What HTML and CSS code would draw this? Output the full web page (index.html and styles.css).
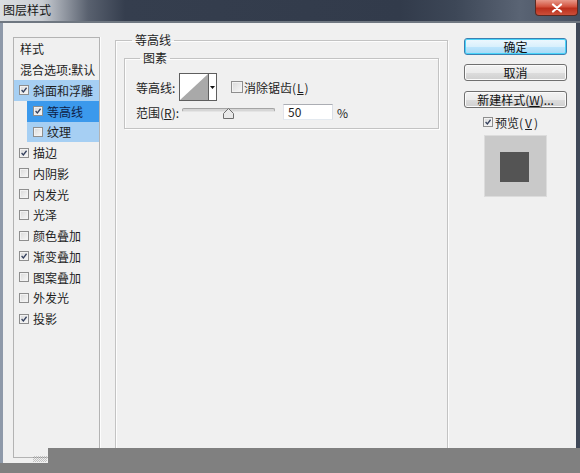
FILE: index.html
```html
<!DOCTYPE html>
<html>
<head>
<meta charset="utf-8">
<title>图层样式</title>
<link rel="stylesheet" href="styles.css">
</head>
<body>
<div class="window">
  <div class="titlebar">
    <span class="title">图层样式</span>
    <span class="close"><svg width="12" height="10" viewBox="0 0 12 10"><path d="M2 1.5 L10 8.5 M10 1.5 L2 8.5" stroke="#fff" stroke-width="2.2" stroke-linecap="round"/></svg></span>
  </div>
  <div class="frame">
    <div class="client">
      <ul class="styles">
        <li class="head head-first">样式</li>
        <li class="head">混合选项:默认</li>
        <li class="item active"><span class="cb"><svg viewBox="0 0 10 10"><path d="M2 5 L4.2 7.4 L8.2 2.2" fill="none" stroke="#34405e" stroke-width="1.6"/></svg></span>斜面和浮雕</li>
        <li class="item sub selected"><span class="cb"><svg viewBox="0 0 10 10"><path d="M2 5 L4.2 7.4 L8.2 2.2" fill="none" stroke="#34405e" stroke-width="1.6"/></svg></span>等高线</li>
        <li class="item sub active"><span class="cb"></span>纹理</li>
        <li class="item"><span class="cb"><svg viewBox="0 0 10 10"><path d="M2 5 L4.2 7.4 L8.2 2.2" fill="none" stroke="#34405e" stroke-width="1.6"/></svg></span>描边</li>
        <li class="item"><span class="cb"></span>内阴影</li>
        <li class="item"><span class="cb"></span>内发光</li>
        <li class="item"><span class="cb"></span>光泽</li>
        <li class="item"><span class="cb"></span>颜色叠加</li>
        <li class="item"><span class="cb"><svg viewBox="0 0 10 10"><path d="M2 5 L4.2 7.4 L8.2 2.2" fill="none" stroke="#34405e" stroke-width="1.6"/></svg></span>渐变叠加</li>
        <li class="item"><span class="cb"></span>图案叠加</li>
        <li class="item"><span class="cb"></span>外发光</li>
        <li class="item"><span class="cb"><svg viewBox="0 0 10 10"><path d="M2 5 L4.2 7.4 L8.2 2.2" fill="none" stroke="#34405e" stroke-width="1.6"/></svg></span>投影</li>
      </ul>

      <fieldset class="group">
        <legend>等高线</legend>
        <fieldset class="inner">
          <legend>图素</legend>
          <div class="row row-contour">
            <span class="lbl lbl-contour">等高线:</span>
            <div class="picker">
              <svg class="curve" width="28" height="26" viewBox="0 0 28 26"><rect width="28" height="26" fill="#fff"/><polygon points="0,26 28,26 28,0" fill="#a9a9a9"/></svg>
              <span class="drop"><svg width="5" height="3" viewBox="0 0 5 3"><polygon points="0,0 5,0 2.5,3" fill="#111"/></svg></span>
            </div>
            <span class="check"><span class="cb cb-big"></span>消除锯齿(<u>L</u>)</span>
          </div>
          <div class="row row-range">
            <span class="lbl lbl-range">范围(<u>R</u>):</span>
            <div class="slider">
              <div class="track"></div>
              <svg class="thumb" width="11" height="11" viewBox="0 0 11 11"><polygon points="0.5,5.5 5.5,0.5 10.5,5.5 10.5,10.5 0.5,10.5" fill="#e9e9e9" stroke="#6e6e6e"/></svg>
            </div>
            <div class="input">50</div>
            <span class="pct">%</span>
          </div>
        </fieldset>
      </fieldset>

      <div class="side">
        <button class="btn btn-default">确定</button>
        <button class="btn">取消</button>
        <button class="btn btn-new">新建样式(<u>W</u>)...</button>
        <div class="preview-check"><span class="cb"><svg viewBox="0 0 10 10"><path d="M2 5 L4.2 7.4 L8.2 2.2" fill="none" stroke="#34405e" stroke-width="1.6"/></svg></span>预览(<u>V</u>)</div>
        <div class="preview"><div class="swatch"></div></div>
      </div>
    </div>
  </div>
</div>
<div class="grip"></div>
<div class="crop"></div>
</body>
</html>
```

FILE: styles.css
```css
* { box-sizing: border-box; }
html, body { margin: 0; }
body {
  width: 580px;
  height: 473px;
  background: #808080;
  overflow: hidden;
  position: relative;
  font-family: "Noto Sans CJK SC", "Noto Sans", sans-serif;
  font-size: 12px;
  color: #1e1e1e;
}
u { text-decoration: underline; text-underline-offset: 1px; }

.window { height: 463px; display: flex; flex-direction: column; }

.titlebar {
  height: 23px;
  flex: none;
  display: flex;
  align-items: flex-start;
  background: linear-gradient(90deg, #dcdfe2 0, #c9cdd3 42px, #59616f 88px, #353e4e 125px, #323b4b 400px, #3d4757 455px, #5a6474 520px, #454f60 580px);
  border-bottom: 2px solid #6f7781;
}
.title { line-height: 20px; padding-left: 3px; color: #151515; }
.close {
  margin-left: auto;
  margin-right: 2px;
  width: 43px;
  height: 16px;
  display: flex;
  align-items: center;
  justify-content: center;
  background: linear-gradient(#e8998a, #d2513d 45%, #bb2f1c 55%, #cc4f3a);
  border: 1px solid #5b2a22;
  border-top: none;
  border-radius: 0 0 4px 4px;
}

.frame {
  flex: 1;
  display: flex;
  background: #f0f0f0;
  border-left: 3px solid #8e99a9;
  border-right: 4px solid #3f4858;
  overflow: hidden;
}
.client { flex: 1; display: flex; align-items: flex-start; padding: 10px 9px 0 10px; }

/* style list */
.styles {
  list-style: none;
  margin: 4px 0 0;
  padding: 0;
  width: 87px;
  height: 421px;
  flex: none;
  border: 1px solid #b3b3b3;
  box-shadow: 1px 0 0 #fdfdfd;
}
.styles li { display: flex; align-items: center; white-space: nowrap; }
.head { height: 21px; padding-left: 6px; }
.item { height: 20.75px; padding-left: 5px; }
.item .cb { margin-right: 4px; }
.sub { margin-left: 13px; padding-left: 6px; }
.active { background: #a6cff3; }
.selected { background: #3b99ec; color: #0f1d45; }

.cb {
  width: 10px;
  height: 10px;
  flex: none;
  border: 1px solid #8e8e8e;
  background: linear-gradient(135deg, #d9d9d9, #f8f8f8);
  box-shadow: inset 0 0 0 1px #f2f2f2;
  display: inline-flex;
}
.cb svg { width: 8px; height: 8px; }
.cb-big { width: 12px; height: 12px; }
.cb-big svg { width: 10px; height: 10px; }

/* group boxes */
.group {
  flex: none;
  width: 333px;
  height: 440px;
  margin: 0 0 0 15px;
  padding: 0 8px;
  border: 1px solid #c3c3c3;
  box-shadow: inset 1px 1px 0 #fdfdfd, 1px 1px 0 #fdfdfd;
  min-width: 0;
}
.group > legend { padding: 0 3px; margin-left: 8px; line-height: 14px; }
.inner {
  margin: 4px 0 0;
  padding: 0 8px 8px 11px;
  border: 1px solid #c3c3c3;
  box-shadow: inset 1px 1px 0 #fdfdfd, 1px 1px 0 #fdfdfd;
  min-width: 0;
}
.inner > legend { padding: 0 3px; margin-left: 4px; line-height: 14px; }

.row { display: flex; align-items: center; }
.row-contour { margin-top: 8px; height: 28px; }
.row-range { margin-top: 3px; height: 16px; }
.lbl-contour { width: 43px; }
.lbl-range { width: 46px; }

.picker { width: 38px; height: 28px; display: flex; border: 1px solid #5e5e5e; background: #fff; }
.curve { display: block; }
.drop {
  flex: 1;
  border-left: 1px solid #5e5e5e;
  display: flex;
  align-items: center;
  justify-content: center;
}
.check { margin-left: 14px; display: flex; align-items: center; gap: 1px; }

.slider { position: relative; width: 93px; height: 16px; }
.track {
  margin-top: 4px;
  height: 4px;
  border-radius: 2px;
  background: #d6d6d6;
  border: 1px solid #a4a4a4;
  border-bottom-color: #e4e4e4;
}
.thumb { position: absolute; left: 41px; top: 4px; }
.input {
  margin-left: 8px;
  width: 50px;
  height: 16px;
  background: #fff;
  border: 1px solid;
  border-color: #abadb3 #dbdfe6 #e3e9ef #e2e3ea;
  padding-left: 4px;
  line-height: 14px;
}
.pct { margin-left: 4px; }

/* right side */
.side { width: 103px; flex: none; margin-left: 16px; padding-top: 5px; display: flex; flex-direction: column; }
.btn {
  height: 17px;
  padding: 0;
  font: inherit;
  line-height: 15px;
  color: #111;
  border: 1px solid #707070;
  border-radius: 3px;
  background: linear-gradient(#f3f3f3, #ebebeb 50%, #dddddd 51%, #cfcfcf);
  box-shadow: inset 0 0 0 1px #fbfbfb;
  white-space: nowrap;
}
.btn + .btn { margin-top: 9px; }
.btn-new { margin-top: 10px !important; }
.btn-default {
  border-color: #3c7fb1;
  background: linear-gradient(#eef8fe, #d9f0fc 50%, #bee6fd 51%, #a7d9f5);
  box-shadow: inset 0 0 0 1px #48d4fa;
}
.preview-check { margin-top: 8px; height: 12px; padding-left: 19px; display: flex; align-items: center; gap: 2px; }
.preview {
  margin-top: 7px;
  align-self: center;
  width: 63px;
  height: 62px;
  border: 1px solid #dcdcdc;
  background: #c9c9c9;
  padding: 16px 0 0 15px;
}
.swatch { width: 29px; height: 30px; background: #545454; }

/* crop artifacts */
.grip {
  position: absolute;
  left: 33px;
  top: 456px;
  width: 14px;
  height: 6px;
  background: repeating-conic-gradient(#555 0 25%, #f0f0f0 0 50%) 0 0 / 2px 2px;
  opacity: 0.3;
}
.crop { position: absolute; left: 48px; top: 448px; width: 532px; height: 25px; background: #808080; }
```
